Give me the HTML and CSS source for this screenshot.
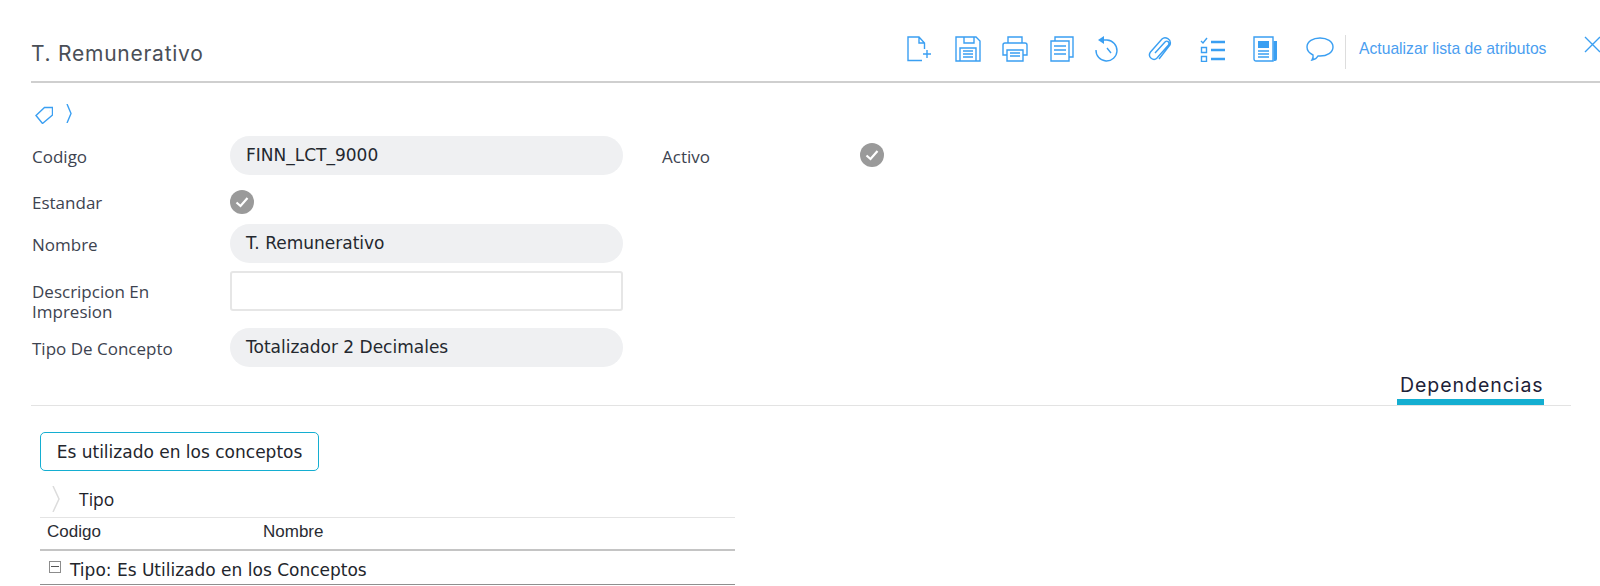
FILE: index.html
```html
<!DOCTYPE html>
<html lang="es">
<head>
<meta charset="utf-8">
<title>T. Remunerativo</title>
<link rel="stylesheet" href="styles.css">
</head>
<body>
<header class="topbar">
  <h1 class="title">T. Remunerativo</h1>
  <div class="tools">
    <div class="tool-group">
      <svg class="tool" width="26" height="26" viewBox="0 0 26 26"><path d="M15 24.500H1V1h11l5.500 6v6M12 1v6h5.500M20 14v8M16 18h8"/></svg>
      <svg class="tool" width="26" height="26" viewBox="0 0 26 26"><path d="M1 1h20l4 4v20H1zM9 1v6h10V1M5 25V12h16v13M8 15h10M8 18h10M8 21h10"/></svg>
      <svg class="tool" width="26" height="26" viewBox="0 0 26 26"><path d="M6 7V1h14v6M5 19H1V9a2 2 0 0 1 2-2h20a2 2 0 0 1 2 2v10h-4M5 14h16v11H5zM8 17h10M8 20h10"/></svg>
      <svg class="tool" width="24" height="26" viewBox="0 0 24 26"><path d="M5 5V1h18v20h-4M1 5h18v20H1zM4 10h12M4 14h12M4 18h12"/></svg>
      <svg class="tool" width="24" height="26" viewBox="0 0 24 26"><path d="M9 4h3a10.500 10.500 0 1 1-11 10M12 12l4 5"/><path class="solid" d="M9 0v8L3 4z"/></svg>
    </div>
    <div class="tool-group tool-group-wide">
      <svg class="tool" width="25" height="26" viewBox="0 0 25 26"><path d="M8 17 18 6c2-2 5 0 3.500 3L10 22c-3.500 3.500-10-1-6.500-6L15 3c3-3 10 0 8 6L12 23"/></svg>
      <svg class="tool" width="25" height="26" viewBox="0 0 25 26"><path d="m1 5 2 2 4-5M1.500 11.500h5v5h-5zM1.500 20.500h5v5h-5z"/><path class="thick" d="M11 6h14M11 14h14M11 23h14"/></svg>
      <svg class="tool" width="25" height="26" viewBox="0 0 25 26"><path d="M20 25H3a2 2 0 0 1-2-2V1h19zM5 15h11M5 18h11M5 21h11"/><path class="solid" d="M5 5h11v7H5zM20.500 5H24v18a2 2 0 0 1-2 2h-1.500z"/></svg>
      <svg class="tool" width="28" height="26" viewBox="0 0 28 26"><path d="M14 2c7 0 13 3.500 13 9s-6 9-13 9h-2c-1 2-3 3.500-6 4 1-1.500 1.500-3 1-5-3-1.500-6-4.500-6-8 0-5.500 6-9 13-9z"/></svg>
    </div>
  </div>
  <a class="refresh">Actualizar lista de atributos</a>
  <svg class="tool t-close" width="16" height="17" viewBox="0 0 16 17"><path d="m1 1 15 15M1 16 16 1"/></svg>
</header>

<nav class="crumbs">
  <svg class="tool" width="18" height="20" viewBox="0 0 18 20"><path d="M1 11.500 9.500 3.500H17.500V11L7.500 19.500zM14 7h.1"/></svg>
  <svg class="tool" width="6" height="19" viewBox="0 0 6 19"><path d="m1 0 4 9.500L1 19"/></svg>
</nav>

<section class="form">
  <div class="row">
    <label class="label">Codigo</label>
    <div class="pill">FINN_LCT_9000</div>
    <label class="label label-second">Activo</label>
    <svg class="check check-high" width="24" height="24" viewBox="0 0 24 24"><circle cx="12" cy="12" r="12"/><path d="m6.500 12.500 4 3.500L17.500 8"/></svg>
  </div>
  <div class="row row-check">
    <label class="label">Estandar</label>
    <svg class="check" width="24" height="24" viewBox="0 0 24 24"><circle cx="12" cy="12" r="12"/><path d="m6.500 12.500 4 3.500L17.500 8"/></svg>
  </div>
  <div class="row row-name">
    <label class="label">Nombre</label>
    <div class="pill">T. Remunerativo</div>
  </div>
  <div class="row row-desc">
    <label class="label label-two">Descripcion En Impresion</label>
    <div class="box"></div>
  </div>
  <div class="row row-type">
    <label class="label">Tipo De Concepto</label>
    <div class="pill">Totalizador 2 Decimales</div>
  </div>
</section>

<div class="tabs">
  <div class="tab">Dependencias</div>
</div>

<section class="deps">
  <button class="btn" type="button">Es utilizado en los conceptos</button>
  <div class="group">
    <svg class="gchev" width="8" height="26" viewBox="0 0 8 26"><path d="m1 0 6 13-6 13"/></svg>
    <span class="group-name">Tipo</span>
  </div>
  <div class="cols">
    <span class="col-code">Codigo</span>
    <span>Nombre</span>
  </div>
  <div class="grow">
    <span class="minus"></span>
    <span>Tipo: Es Utilizado en los Conceptos</span>
  </div>
</section>
</body>
</html>
```
FILE: styles.css
```css
html, body { margin: 0; padding: 0; background: #fff; overflow: hidden; }
body { height: 586px; font-family: "Open Sans", sans-serif; color: #3a3f4a; }
.topbar {
  display: flex; align-items: center;
  height: 59px; padding-top: 22px; margin-left: 31px;
  border-bottom: 2px solid #cfcfcf;
}
.title {
  margin: 3px 0 0; font: 400 21px "Inter", sans-serif; letter-spacing: 0.750px; color: #4a4f57;
  white-space: nowrap;
}
.tools {
  display: flex; margin-left: auto; gap: 28px;
  height: 34px; box-sizing: border-box; padding: 1px 11px 0 0;
  border-right: 1px solid #ddd;
}
.tool-group { display: flex; gap: 21.500px; height: 26px; }
.tool-group-wide { gap: 28px; }
.tool { fill: none; stroke: #3a9ff2; stroke-width: 1.400; display: block; flex: none; }
.tool .solid { fill: #3a9ff2; stroke: none; }
.tool .thick { stroke-width: 2.500; }
.refresh { margin: -5px 0 0 13px; font: 15.700px "Liberation Sans", sans-serif; color: #4a9ef0; white-space: nowrap; width: 225px; }
.t-close { margin-top: -15px; }
.crumbs { display: flex; align-items: center; gap: 13px; height: 53px; padding: 8px 0 0 35px; box-sizing: border-box; }
.form { padding-left: 32px; }
.row { display: grid; grid-template-columns: 198px 393px 39px 198px 24px; align-items: center; }
.label { font: 17px "Open Sans", sans-serif; color: #3d4350; padding-top: 1px; }
.label-second { grid-column: 3 / 5; padding-left: 39px; }
.pill {
  height: 39px; border-radius: 20px; background: #eff0f2;
  padding-left: 16px; box-sizing: border-box;
  font: 17px/39px "DejaVu Sans", sans-serif; color: #24282f;
}
.check circle { fill: #9a9a9a; }
.check path { fill: none; stroke: #fff; stroke-width: 2.200; }
.check-high { margin-top: -1px; }
.row-check { margin-top: 15px; }
.row-name { margin-top: 10px; }
.row-desc { margin-top: 8px; height: 40px; align-items: start; }
.row-type { margin-top: 17px; }
.label-two { line-height: 20px; padding-top: 11px; width: 150px; }
.box { height: 40px; border: 2px solid #e6e6e6; border-radius: 3px; box-sizing: border-box; }
.tabs { display: flex; justify-content: flex-end; height: 39px; margin: 0 29px 0 31px; border-bottom: 1px solid #e3e3e3; box-sizing: border-box; }
.tab {
  width: 147px; height: 38px; box-sizing: border-box; margin-right: 27px;
  border-bottom: 6px solid #14aed1; padding: 4px 0 0 3px;
  font: 19.500px/28px "Inter", sans-serif; letter-spacing: 0.950px; color: #1d2238;
  white-space: nowrap;
}
.deps { padding: 26px 0 0 40px; width: 695px; }
.btn {
  display: block; width: 279px; height: 39px; padding: 0; background: #fff;
  border: 1px solid #14aed1; border-radius: 5px;
  font: 17px "DejaVu Sans", sans-serif; color: #23262d;
}
.group { display: flex; align-items: center; height: 47px; border-bottom: 1px solid #e4e4e4; padding: 9px 0 0 12px; box-sizing: border-box; }
.gchev { fill: none; stroke: #dcdcdc; stroke-width: 1.500; flex: none; }
.group-name { margin-left: 19px; font: 17.500px "Open Sans", sans-serif; color: #1d2129; }
.cols { display: flex; align-items: center; height: 33px; border-bottom: 2px solid #c4c4c4; padding: 0 0 3px 7px; box-sizing: border-box; font: 17px "Liberation Sans", sans-serif; color: #2a2c33; }
.col-code { width: 216px; }
.grow { display: flex; align-items: center; height: 34px; border-bottom: 1px solid #8f8f8f; padding: 4px 0 0 9px; box-sizing: border-box; font: 17px "DejaVu Sans", sans-serif; color: #22252c; }
.minus { width: 12px; height: 12px; border: 1px solid #8c8c8c; box-sizing: border-box; margin: -6px 9px 0 0; flex: none; background: linear-gradient(#555,#555) center/8px 1px no-repeat; }
```
